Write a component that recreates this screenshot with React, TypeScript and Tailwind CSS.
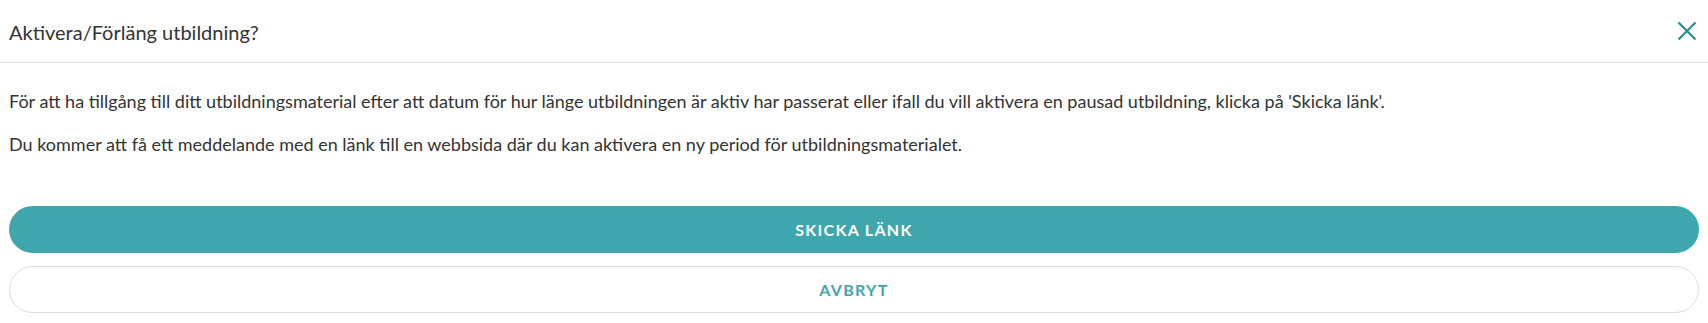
import React from "react";

export default function App() {
  return (
    <div className="w-[1708px] h-[323px] bg-white text-[#333333]" style={{ fontFamily: "Lato, 'Open Sans', sans-serif" }}>
      <div className="h-[63px] border-b border-[#dedede] flex items-center justify-between pl-[9px] pr-[11px]">
        <h1 className="text-[20px] leading-[24px] font-normal mt-[2px]">Aktivera/Förläng utbildning?</h1>
        <button className="w-[20px] h-[20px] flex items-center justify-center text-[#2e8b8f]" aria-label="Stäng">
          <svg width="20" height="20" viewBox="0 0 20 20" fill="none" stroke="currentColor" strokeWidth="2.2">
            <path d="M1.5 1.5 L18.5 18.5 M18.5 1.5 L1.5 18.5" />
          </svg>
        </button>
      </div>
      <div className="px-[9px] pt-[26px]">
        <p className="text-[18px] leading-[24px]">
          För att ha tillgång till ditt utbildningsmaterial efter att datum för hur länge utbildningen är aktiv har passerat eller ifall du vill aktivera en pausad utbildning, klicka på 'Skicka länk'.
        </p>
        <p className="text-[18px] leading-[24px] mt-[19px]">
          Du kommer att få ett meddelande med en länk till en webbsida där du kan aktivera en ny period för utbildningsmaterialet.
        </p>
        <div className="mt-[50px] flex flex-col gap-[13px]">
          <button className="h-[47px] w-full rounded-full bg-[#3fa6ad] text-white text-[16px] font-bold tracking-[1.3px]">
            SKICKA LÄNK
          </button>
          <button className="h-[47px] w-full rounded-full border border-[#dcdcdc] bg-white text-[#3fa6ad] text-[16px] font-bold tracking-[1.3px]">
            AVBRYT
          </button>
        </div>
      </div>
    </div>
  );
}
